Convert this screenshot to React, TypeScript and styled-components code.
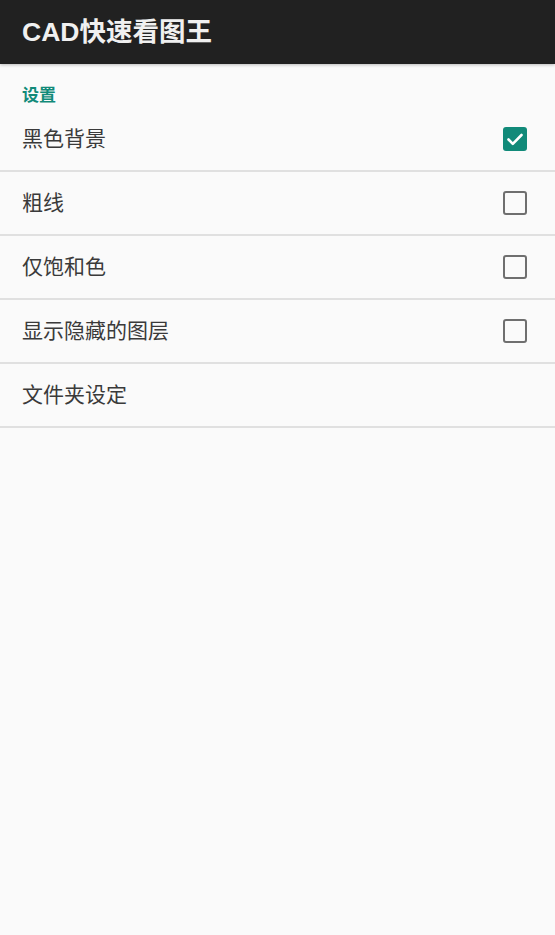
import React from "react";
import styled, { createGlobalStyle } from "styled-components";

const Global = createGlobalStyle`
  html, body { margin: 0; padding: 0; background: #fafafa; }
  body { font-family: Roboto, "Noto Sans CJK SC", "Noto Sans", sans-serif; }
`;

const Page = styled.div`
  width: 555px;
  min-height: 935px;
  background: #fafafa;
  display: flex;
  flex-direction: column;
`;

const Toolbar = styled.header`
  height: 64px;
  background: #212121;
  display: flex;
  align-items: center;
  padding: 0 22px;
  box-sizing: border-box;
  box-shadow: 0 1px 3px rgba(0,0,0,0.25);
`;

const Title = styled.h1`
  margin: 0;
  color: #f0f0f0;
  font-size: 26.5px;
  font-weight: 700;
  font-family: "Liberation Sans", "Noto Sans CJK SC", sans-serif;
  line-height: 32px;
`;

const SectionLabel = styled.div`
  height: 44px;
  box-sizing: border-box;
  padding: 19px 22px 0;
  color: #118a79;
  font-size: 17px;
  font-weight: 700;
  line-height: 24px;
`;

const Row = styled.div`
  height: 64px;
  box-sizing: border-box;
  display: flex;
  align-items: center;
  justify-content: space-between;
  padding: 0 28px 0 22px;
  border-bottom: 2px solid #e0e0e0;
`;

const Label = styled.span`
  font-size: 21px;
  color: #3a3a3a;
  line-height: 28px;
`;

const Box = styled.span<{ $checked?: boolean }>`
  width: 24px;
  height: 24px;
  box-sizing: border-box;
  border-radius: 3px;
  display: flex;
  align-items: center;
  justify-content: center;
  background: ${(p) => (p.$checked ? "#118a79" : "transparent")};
  border: ${(p) => (p.$checked ? "none" : "2px solid #6f6f6f")};
`;

const items: { label: string; checked?: boolean; box: boolean }[] = [
  { label: "黑色背景", checked: true, box: true },
  { label: "粗线", box: true },
  { label: "仅饱和色", box: true },
  { label: "显示隐藏的图层", box: true },
  { label: "文件夹设定", box: false },
];

export default function App() {
  return (
    <Page>
      <Global />
      <Toolbar>
        <Title>CAD快速看图王</Title>
      </Toolbar>
      <SectionLabel>设置</SectionLabel>
      {items.map((it) => (
        <Row key={it.label}>
          <Label>{it.label}</Label>
          {it.box && (
            <Box $checked={it.checked}>
              {it.checked && (
                <svg width="24" height="24" viewBox="0 0 24 24">
                  <path d="M5.5 12.5l4.3 4.3L18.5 8" fill="none" stroke="#fff" strokeWidth="2.6" strokeLinecap="round" strokeLinejoin="round" />
                </svg>
              )}
            </Box>
          )}
        </Row>
      ))}
    </Page>
  );
}
